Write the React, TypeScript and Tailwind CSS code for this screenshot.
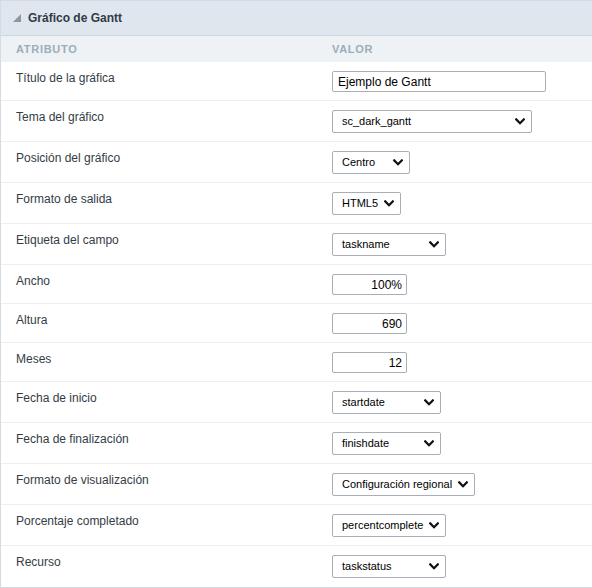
import React from "react";

type Row =
  | { label: string; kind: "input"; value: string; width: string; right?: boolean }
  | { label: string; kind: "select"; value: string; width: string };

const rows: Row[] = [
  { label: "Título de la gráfica", kind: "input", value: "Ejemplo de Gantt", width: "w-[214px]" },
  { label: "Tema del gráfico", kind: "select", value: "sc_dark_gantt", width: "w-[200px]" },
  { label: "Posición del gráfico", kind: "select", value: "Centro", width: "w-[78px]" },
  { label: "Formato de salida", kind: "select", value: "HTML5", width: "w-[69px]" },
  { label: "Etiqueta del campo", kind: "select", value: "taskname", width: "w-[114px]" },
  { label: "Ancho", kind: "input", value: "100%", width: "w-[75px]", right: true },
  { label: "Altura", kind: "input", value: "690", width: "w-[75px]", right: true },
  { label: "Meses", kind: "input", value: "12", width: "w-[75px]", right: true },
  { label: "Fecha de inicio", kind: "select", value: "startdate", width: "w-[109px]" },
  { label: "Fecha de finalización", kind: "select", value: "finishdate", width: "w-[109px]" },
  { label: "Formato de visualización", kind: "select", value: "Configuración regional", width: "w-[143px]" },
  { label: "Porcentaje completado", kind: "select", value: "percentcomplete", width: "w-[114px]" },
  { label: "Recurso", kind: "select", value: "taskstatus", width: "w-[114px]" },
];

function Chevron() {
  return (
    <svg width="10" height="7" viewBox="0 0 10 7" className="shrink-0">
      <path d="M1.2 1.4 L5 5.2 L8.8 1.4" fill="none" stroke="#111" strokeWidth="2.2" strokeLinecap="square" />
    </svg>
  );
}

function Field({ row }: { row: Row }) {
  if (row.kind === "input") {
    return (
      <div
        className={`${row.width} h-[21px] border border-[#a7aeb8] rounded-[2px] bg-white flex items-center text-[12px] text-black ${
          row.right ? "justify-end pr-[4px]" : "pl-[5px]"
        }`}
      >
        {row.value}
      </div>
    );
  }
  return (
    <div
      className={`${row.width} h-[23px] border border-[#a7aeb8] rounded-[2px] bg-white flex items-center justify-between pl-[9px] pr-[6px] text-[11px] text-black`}
    >
      <span className="whitespace-nowrap">{row.value}</span>
      <Chevron />
    </div>
  );
}

export default function App() {
  return (
    <div
      className="w-[592px] h-[588px] bg-white overflow-hidden"
      style={{ fontFamily: '"Liberation Sans", Arial, sans-serif' }}
    >
      <div className="border-l border-t border-b border-[#d3dce4]">
        {/* panel header */}
        <div className="h-[35px] bg-[#dfe6ee] border-b border-[#cdd7e0] flex items-center pl-[12px] gap-[7px]">
          <svg width="8" height="8" viewBox="0 0 8 8">
            <polygon points="0,8 8,8 8,0" fill="#8b98a4" />
          </svg>
          <span className="text-[12px] font-bold text-[#323b45]">Gráfico de Gantt</span>
        </div>

        {/* column header */}
        <div className="h-[26px] bg-[#eef2f5] flex items-center text-[11px] font-bold tracking-[0.7px] text-[#9aadbb]">
          <div className="w-[331px] pl-[15px]">ATRIBUTO</div>
          <div>VALOR</div>
        </div>

        {rows.map((row, i) => (
          <div
            key={row.label}
            className={`flex ${row.kind === "input" ? "h-[39px]" : "h-[41px]"} ${
              i < rows.length - 1 ? "border-b border-[#edf0f3]" : ""
            }`}
          >
            <div className="w-[331px] pl-[15px] pt-[8px] text-[12px] leading-4 text-[#343c46]">{row.label}</div>
            <div className="pt-[9px]">
              <Field row={row} />
            </div>
          </div>
        ))}
      </div>
    </div>
  );
}
